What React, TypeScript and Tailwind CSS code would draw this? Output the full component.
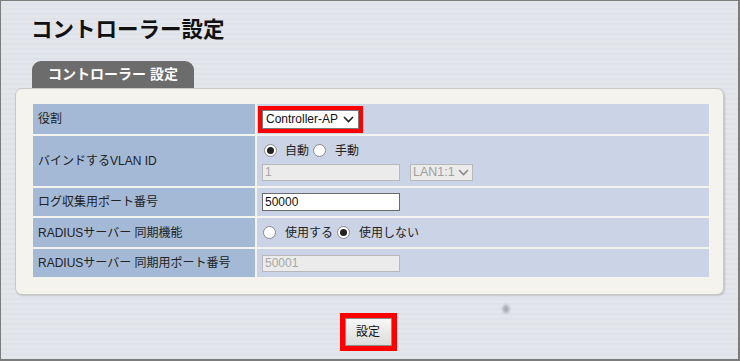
import React from "react";

const Chevron = ({ color = "#222" }: { color?: string }) => (
  <svg width="11" height="7" viewBox="0 0 11 7" className="shrink-0">
    <polyline points="1,1 5.5,5.5 10,1" fill="none" stroke={color} strokeWidth="1.6" />
  </svg>
);

const Radio = ({ checked }: { checked?: boolean }) => (
  <span className="inline-flex h-[13px] w-[13px] items-center justify-center rounded-full border border-[#8a8a8a] bg-white shrink-0">
    {checked && <span className="block h-[7px] w-[7px] rounded-full bg-[#222]" />}
  </span>
);

const Row = ({ label, h, children }: { label: string; h: string; children: React.ReactNode }) => (
  <div className={`flex gap-[2px] ${h}`}>
    <div className="flex w-[222px] shrink-0 items-center bg-[#a3b9d6] pl-[5px] text-[12px] text-[#222]">{label}</div>
    <div className="flex flex-1 flex-col justify-center bg-[#cbd3e7] pl-[5px]">{children}</div>
  </div>
);

export default function App() {
  return (
    <div className="relative h-[361px] w-[740px] overflow-hidden border border-r-2 border-b-2 border-[#7c7c7c] bg-[repeating-linear-gradient(180deg,#e3e6eb_0px,#e3e6eb_2px,#d9dde4_3px,#e6e9ee_4px,#dee2e8_5px)] font-['Liberation_Sans','Noto_Sans_CJK_JP',sans-serif]">
      <div className="pl-[30px] pt-[15px] text-[21.5px] font-bold leading-[28px] text-[#111]">コントローラー設定</div>
      <div className="ml-[31px] mt-[17px] flex h-[27px] w-[162px] items-center justify-center rounded-t-[9px] bg-[#6c6c6c] text-[14px] font-bold text-white">
        コントローラー 設定
      </div>
      <div className="ml-[14px] h-[207px] w-[709px] rounded-[7px] border border-[#c9c9c4] bg-[#f4f3ee] pl-[17px] pr-[14px] pt-[15px] shadow-[1px_1px_2px_rgba(0,0,0,0.15)]">
        <div className="flex flex-col gap-[2px]">
          <Row label="役割" h="h-[30px]">
            <div className="ml-[-4px] flex h-[27px] w-[105px] items-center border-[4px] border-[#ff0000]">
              <div className="flex h-full w-full items-center justify-between border border-[#7a7a7a] bg-white pl-[3px] pr-[4px] text-[12px] text-[#111]">
                <span>Controller-AP</span>
                <Chevron />
              </div>
            </div>
          </Row>
          <Row label="バインドするVLAN ID" h="h-[50px]">
            <div className="flex items-center pl-[2px] text-[12px] text-[#222]">
              <Radio checked />
              <span className="ml-[8px]">自動</span>
              <span className="ml-[4px] inline-flex"><Radio /></span>
              <span className="ml-[9px]">手動</span>
            </div>
            <div className="mt-[4px] flex items-center">
              <div className="flex h-[17px] w-[138px] items-center border border-[#b8b8b8] bg-[#ebebeb] pl-[2px] text-[12px] text-[#a8a8a8]">1</div>
              <div className="ml-[10px] flex h-[17px] w-[63px] items-center justify-between border border-[#b8b8b8] bg-[#ebebeb] pl-[2px] pr-[3px] text-[12.5px] text-[#a0a0a0]">
                <span>LAN1:1</span>
                <Chevron color="#8a8a8a" />
              </div>
            </div>
          </Row>
          <Row label="ログ収集用ポート番号" h="h-[28px]">
            <div className="flex h-[18px] w-[138px] items-center border border-[#6a6a6a] bg-white pl-[2px] text-[12px] text-[#111]">50000</div>
          </Row>
          <Row label="RADIUSサーバー 同期機能" h="h-[29px]">
            <div className="flex items-center pl-[1px] text-[12px] text-[#222]">
              <Radio />
              <span className="ml-[9px]">使用する</span>
              <span className="ml-[4px] inline-flex"><Radio checked /></span>
              <span className="ml-[9px]">使用しない</span>
            </div>
          </Row>
          <Row label="RADIUSサーバー 同期用ポート番号" h="h-[28px]">
            <div className="flex h-[17px] w-[138px] items-center border border-[#b8b8b8] bg-[#ebebeb] pl-[2px] text-[12px] text-[#a8a8a8]">50001</div>
          </Row>
        </div>
      </div>
      <div className="mt-[18px] flex justify-center pr-[1px]">
        <div className="ml-[-2px] border-[5px] border-[#ff0000]">
          <div className="flex h-[28px] w-[47px] items-center justify-center border border-[#8c8c8c] bg-[linear-gradient(180deg,#f7f7f7,#dcdcdc)] text-[12px] text-[#111]">
            設定
          </div>
        </div>
      </div>
      <div className="absolute left-[502px] top-[304px] h-[8px] w-[6px] rounded-full bg-[#8a8e96] opacity-70 blur-[1.5px]" />
    </div>
  );
}
